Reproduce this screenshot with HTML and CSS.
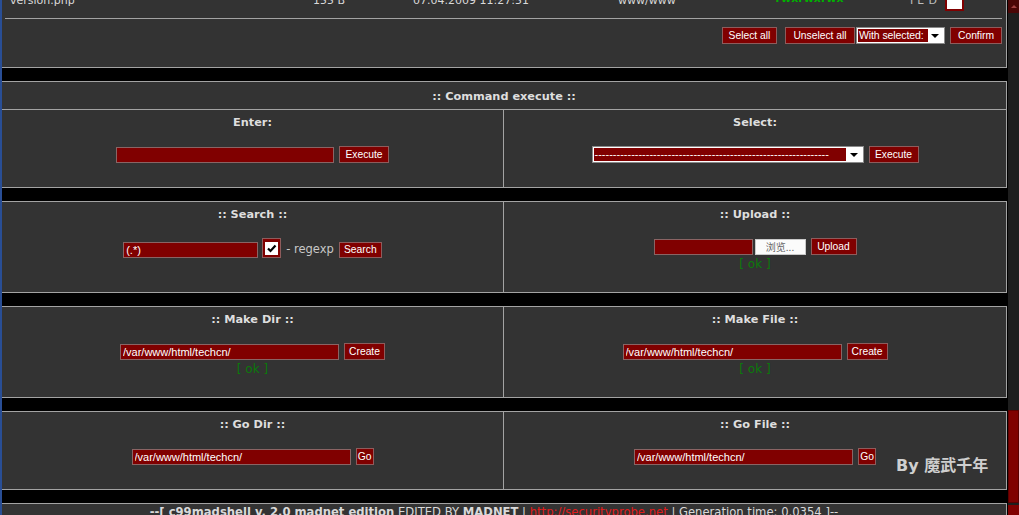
FILE: index.html
```html
<!DOCTYPE html>
<html>
<head>
<meta charset="utf-8">
<title>c99madshell</title>
<link rel="stylesheet" href="styles.css">
</head>
<body>
<div class="screen">
  <div class="edge"></div>
  <main class="page">
    <section class="panel files">
      <div class="filerow">
        <span>version.php</span>
        <span>155 B</span>
        <span>07.04.2009 11:27:51</span>
        <span>www/www</span>
        <span class="perm">-rwxrwxrwx</span>
        <span class="acts"><span class="ied">I E D</span><span class="fchk"></span></span>
      </div>
      <div class="rule"></div>
      <div class="actions">
        <button class="btn b-sel">Select all</button>
        <button class="btn b-unsel">Unselect all</button>
        <div class="select s-with"><span class="sel-val">With selected:</span><span class="arrow"></span></div>
        <button class="btn b-confirm">Confirm</button>
      </div>
    </section>

    <section class="panel grid">
      <div class="head">:: Command execute ::</div>
      <div class="cell left">
        <div class="title">Enter:</div>
        <div class="row"><input class="field w218" value=""><button class="btn b-exec">Execute</button></div>
      </div>
      <div class="cell">
        <div class="title">Select:</div>
        <div class="row">
          <div class="select s-cmd"><span class="sel-val">----------------------------------------------------------------</span><span class="arrow"></span></div>
          <button class="btn b-exec">Execute</button>
        </div>
      </div>
    </section>

    <section class="panel grid">
      <div class="cell left">
        <div class="title">:: Search ::</div>
        <div class="row search">
          <input class="field w135" value="(.*)">
          <span class="chk"><span class="chk-box"><svg viewBox="0 0 11 11" width="11" height="11"><path d="M2 5.5 L4.5 8 L9.5 2.5" fill="none" stroke="#000" stroke-width="2.2"/></svg></span></span>
          <span class="regexp">- regexp</span>
          <button class="btn b-search">Search</button>
        </div>
      </div>
      <div class="cell okcell">
        <div class="title">:: Upload ::</div>
        <div class="row">
          <span class="file"><span class="field w99"></span><span class="browse">浏览...</span></span>
          <button class="btn b-upload">Upload</button>
        </div>
        <div class="ok">[ ok ]</div>
      </div>
    </section>

    <section class="panel grid">
      <div class="cell left okcell">
        <div class="title">:: Make Dir ::</div>
        <div class="row"><input class="field w219" value="/var/www/html/techcn/"><button class="btn b-create">Create</button></div>
        <div class="ok">[ ok ]</div>
      </div>
      <div class="cell okcell">
        <div class="title">:: Make File ::</div>
        <div class="row"><input class="field w219" value="/var/www/html/techcn/"><button class="btn b-create">Create</button></div>
        <div class="ok">[ ok ]</div>
      </div>
    </section>

    <section class="panel grid">
      <div class="cell left">
        <div class="title">:: Go Dir ::</div>
        <div class="row"><input class="field w219" value="/var/www/html/techcn/"><button class="btn b-go">Go</button></div>
      </div>
      <div class="cell gofile">
        <div class="title">:: Go File ::</div>
        <div class="row"><input class="field w219" value="/var/www/html/techcn/"><button class="btn b-go">Go</button></div>
        <div class="mark">By 魔武千年</div>
      </div>
    </section>

    <section class="panel foot">
      <b>--[ c99madshell v. 2.0 madnet edition</b> EDITED BY <b>MADNET</b> | <a class="link" href="#">http://securityprobe.net</a> | Generation time: 0.0354 ]--
    </section>
  </main>
  <div class="sbar">
    <div class="sb-up"><span class="tri-up"></span></div>
    <div class="sb-track"><div class="sb-thumb"></div></div>
    <div class="sb-down"></div>
  </div>
</div>
</body>
</html>
```

FILE: styles.css
```css
* { box-sizing: border-box; }
html, body { margin: 0; padding: 0; background: #000; }
body {
  font: 11px/14px "DejaVu Sans", Verdana, sans-serif;
  color: #d9d9d9;
  height: 515px;
  overflow: hidden;
}
.screen { display: flex; height: 515px; overflow: hidden; }
.edge { width: 2px; flex: none; background: #294e95; }
.page {
  width: 1006px;
  flex: none;
  padding-right: 1px;
  margin-top: -7px;
  display: flex;
  flex-direction: column;
  gap: 13px;
}
.panel {
  background: #333333;
  border: 1px solid #a3a3a3;
  border-left: none;
}

/* file list remainder */
.filerow {
  display: grid;
  grid-template-columns: 303px 100px 205px 153px 139px 1fr;
  padding-left: 8px;
  height: 24px;
  align-items: start;
}
.perm { color: #00b000; font-weight: bold; margin-top: -2px; }
.acts { display: flex; align-items: flex-start; gap: 8px; }
.ied { color: #bdbdbd; letter-spacing: 0.3px; }
.fchk {
  width: 19px; height: 17px;
  background: #fff;
  border: 2px solid #800000;
  display: inline-block;
}
.rule { height: 1px; background: #a3a3a3; margin: 0 4px 0 3px; }
.actions {
  display: flex;
  justify-content: flex-end;
  align-items: center;
  padding: 8px 4px 23px 0;
}

/* controls */
.btn {
  height: 17px;
  padding: 0;
  margin: 0;
  background: #800000;
  color: #fff;
  border: 1px solid #8e5c5c;
  font: 10.3px/15px "Liberation Sans", Tahoma, sans-serif;
  text-align: center;
}
.actions .b-sel { width: 55px; margin-right: 8px; }
.actions .b-unsel { width: 70px; margin-right: 1px; }
.actions .b-confirm { width: 52px; margin-left: 5px; }
.b-exec { width: 50px; }
.b-search { width: 43px; height: 16px; line-height: 14px; }
.b-upload { width: 46px; }
.b-create { width: 41px; }
.b-go { width: 18px; }

.field {
  display: inline-block;
  height: 16px;
  padding: 0 2px;
  margin: 0;
  background: #800000;
  color: #fff;
  border: 1px solid #8a6464;
  font: 11px/14px "Liberation Sans", Tahoma, sans-serif;
  outline: none;
}
.w218 { width: 218px; }
.w219 { width: 219px; }
.w135 { width: 135px; }
.w99 { width: 99px; }

.select {
  display: flex;
  align-items: center;
  height: 17px;
  background: #fff;
  border: 1px solid #8a8a8a;
  padding: 1px 0 1px 1px;
  font: 11px/13px "Liberation Sans", Tahoma, sans-serif;
  color: #fff;
}
.sel-val {
  background: #800000;
  height: 13px;
  padding: 0 1px;
  overflow: hidden;
  white-space: nowrap;
}
.arrow {
  width: 0; height: 0;
  border-left: 4px solid transparent;
  border-right: 4px solid transparent;
  border-top: 4px solid #000;
  margin-left: auto;
  margin-right: 5px;
}
.s-with { width: 89px; }
.s-with .sel-val { width: 70px; font-size: 10.5px; letter-spacing: -0.1px; }
.s-cmd { width: 272px; }
.s-cmd .sel-val { width: 252px; }

/* table panels */
.grid { display: grid; grid-template-columns: 1fr 1fr; }
.head {
  grid-column: 1 / -1;
  text-align: center;
  font-weight: bold;
  padding: 8px 0 5px;
  border-bottom: 1px solid #a3a3a3;
}
.cell {
  display: flex;
  flex-direction: column;
  align-items: center;
  padding: 6px 0 24px;
}
.cell.okcell { padding-bottom: 21px; }
.cell.left { border-right: 1px solid #a3a3a3; }
.title, .head { font-size: 11.3px; color: #dedede; }
.title { font-weight: bold; line-height: 14px; }
.row {
  margin-top: 16px;
  height: 17px;
  display: flex;
  align-items: center;
  gap: 5px;
}
.row.search { height: auto; align-items: flex-end; gap: 4px; }
.ok { color: #0b7a0b; font-size: 12px; line-height: 13px; margin-top: 3px; }

.chk {
  width: 19px; height: 20px;
  background: #800000;
  border: 1px solid #8e5c5c;
  display: flex;
  align-items: center;
  justify-content: center;
}
.chk-box {
  width: 13px; height: 13px;
  background: #fff;
  display: flex;
  align-items: center;
  justify-content: center;
}
.regexp { color: #c8c8c8; font-size: 11.5px; margin: 0 1px 2px 1px; }

.file { display: flex; gap: 2px; }
.browse {
  width: 51px; height: 16px;
  background: #fbfbfb;
  border: 1px solid #c9c9c9;
  color: #666;
  font: 10px/14px "Noto Sans CJK SC", sans-serif;
  text-align: center;
}

.gofile { position: relative; }
.mark {
  position: absolute;
  left: 392px;
  top: 44px;
  font: bold 16px/20px "DejaVu Sans", "Noto Sans CJK SC", sans-serif;
  color: #cfcfcf;
  white-space: nowrap;
}

.foot {
  height: 30px;
  padding: 1px 20px 0 0;
  text-align: center;
  white-space: nowrap;
  font-size: 11.6px;
}
.link { color: #e21b1b; text-decoration: none; }

/* scrollbar */
.sbar {
  width: 11px;
  flex: none;
  display: flex;
  flex-direction: column;
  background: #1e1e1e;
}
.sb-up {
  height: 13px;
  background: #4a0606;
  display: flex;
  justify-content: center;
  align-items: center;
}
.tri-up {
  width: 0; height: 0;
  border-left: 3px solid transparent;
  border-right: 3px solid transparent;
  border-bottom: 3px solid #a04040;
}
.sb-track {
  flex: 1;
  display: flex;
  flex-direction: column;
  justify-content: flex-end;
}
.sb-thumb { height: 93px; background: #800000; border: 1px solid #5a0000; }
.sb-down { height: 10px; margin-top: 2px; background: #800000; }
```
